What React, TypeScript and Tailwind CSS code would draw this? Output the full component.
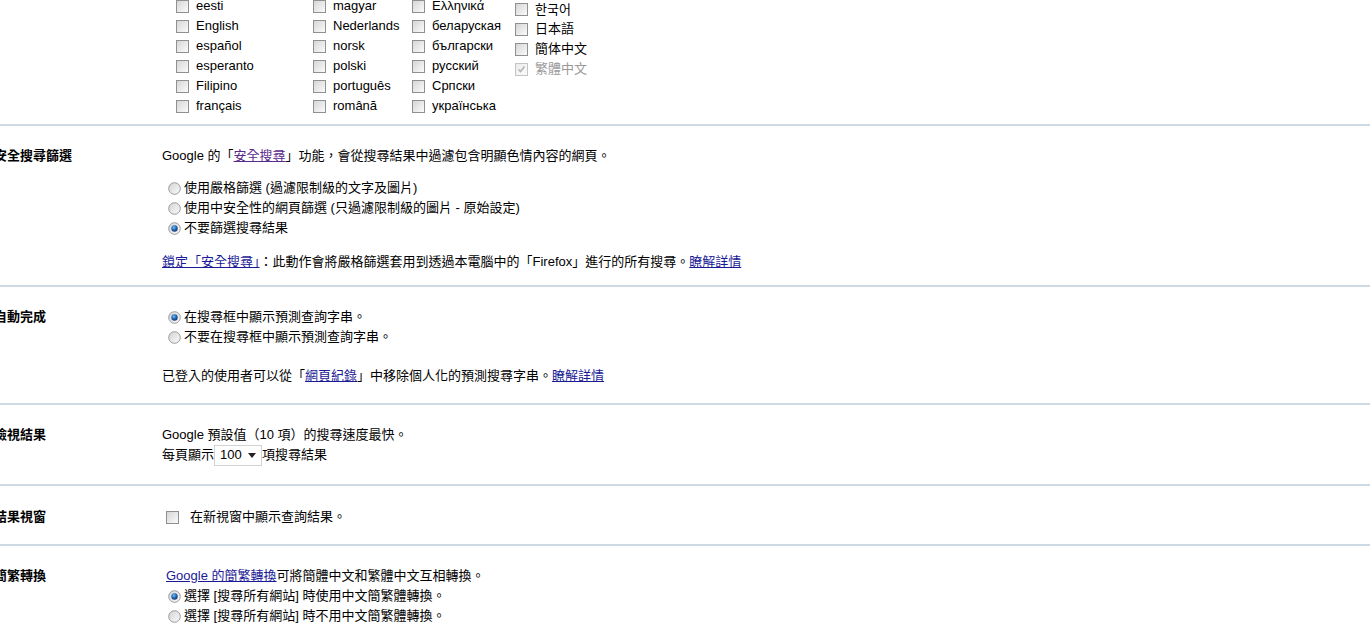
import React from "react";

function Box({ checked, disabled, className = "" }: { checked?: boolean; disabled?: boolean; className?: string }) {
  return (
    <span
      className={
        "relative inline-flex w-[13px] h-[13px] shrink-0 border bg-linear-to-br " +
        (disabled ? "border-[#c4c4c4] from-[#ececec] to-[#fbfbfb] " : "border-[#8f9090] from-[#d6d6d6] to-[#fbfbfb] ") +
        className
      }
    >
      {checked && (
        <svg width="11" height="11" viewBox="0 0 11 11" className="absolute left-0 top-0">
          <path d="M2.5 5.5 L4.5 7.5 L8.5 2.5" fill="none" stroke="#b4b4b4" strokeWidth="1.6" />
        </svg>
      )}
    </span>
  );
}

function Radio({ checked }: { checked?: boolean }) {
  return (
    <svg width="13" height="13" viewBox="0 0 13 13" className="shrink-0">
      <defs>
        <linearGradient id="rg" x1="0" y1="0" x2="1" y2="1">
          <stop offset="0" stopColor="#d2d2d2" />
          <stop offset="1" stopColor="#fcfcfc" />
        </linearGradient>
        <radialGradient id="rb" cx="0.4" cy="0.35" r="0.7">
          <stop offset="0" stopColor="#7cc4f8" />
          <stop offset="0.5" stopColor="#2468b4" />
          <stop offset="1" stopColor="#15336a" />
        </radialGradient>
      </defs>
      <circle cx="6.5" cy="6.5" r="5.8" fill="url(#rg)" stroke="#9a9a9a" strokeWidth="1" />
      {checked && <circle cx="6.5" cy="6.5" r="3.2" fill="url(#rb)" />}
    </svg>
  );
}

function RadioRow({ checked, children }: { checked?: boolean; children: React.ReactNode }) {
  return (
    <div className="flex items-center h-[20px] pl-[6px] gap-[3px] whitespace-nowrap">
      <Radio checked={checked} />
      <span>{children}</span>
    </div>
  );
}

function Sep() {
  return <div className="h-[2px] w-full bg-[#cdd9e5]" />;
}

const linkBlue = "text-[#1a1a96] underline";

const cols: string[][] = [
  ["eesti", "English", "español", "esperanto", "Filipino", "français"],
  ["magyar", "Nederlands", "norsk", "polski", "português", "română"],
  ["Ελληνικά", "беларуская", "български", "русский", "Српски", "українська"],
];
const colW = ["w-[137px]", "w-[99px]", "w-[103px]"];

function Label({ children }: { children: React.ReactNode }) {
  return <div className="w-[168px] shrink-0 ml-[-6px] font-bold leading-[20px] whitespace-nowrap">{children}</div>;
}

export default function App() {
  return (
    <div className="w-[1370px] h-[623px] overflow-hidden bg-white text-black text-[13px] leading-[20px] font-['Liberation_Sans','Noto_Sans_CJK_TC',sans-serif]">
      {/* languages */}
      <div className="flex mt-[-4px] pb-[8px] pl-[176px]">
        {cols.map((c, i) => (
          <div key={i} className={colW[i] + " flex flex-col"}>
            {c.map((l) => (
              <div key={l} className="flex items-center h-[20px] gap-[7px] whitespace-nowrap">
                <Box />
                <span>{l}</span>
              </div>
            ))}
          </div>
        ))}
        <div className="flex flex-col mt-[3px]">
          {[
            { t: "한국어", kr: true },
            { t: "日本語" },
            { t: "簡体中文" },
            { t: "繁體中文", dis: true },
          ].map((l) => (
            <div key={l.t} className="flex items-center h-[20px] gap-[7px] whitespace-nowrap">
              <Box checked={l.dis} disabled={l.dis} />
              <span
                className={
                  (l.dis ? "text-[#9a9a9a] " : "") +
                  (l.kr ? "font-['Noto_Sans_CJK_KR',sans-serif]" : "")
                }
              >
                {l.t}
              </span>
            </div>
          ))}
        </div>
      </div>
      <Sep />

      {/* safe search */}
      <div className="flex pt-[20px] pb-[13px]">
        <Label>安全搜尋篩選</Label>
        <div className="flex flex-col">
          <div className="whitespace-nowrap">
            Google 的「<a className="text-[#5a2a8c] underline">安全搜尋</a>」功能，會從搜尋結果中過濾包含明顯色情內容的網頁。
          </div>
          <div className="mt-[12px] flex flex-col">
            <RadioRow>使用嚴格篩選 (過濾限制級的文字及圖片)</RadioRow>
            <RadioRow>使用中安全性的網頁篩選 (只過濾限制級的圖片 - 原始設定)</RadioRow>
            <RadioRow checked>不要篩選搜尋結果</RadioRow>
          </div>
          <div className="mt-[14px] whitespace-nowrap">
            <a className={linkBlue}>鎖定「安全搜尋」</a>：此動作會將嚴格篩選套用到透過本電腦中的「Firefox」進行的所有搜尋。
            <a className={linkBlue}>瞭解詳情</a>
          </div>
        </div>
      </div>
      <Sep />

      {/* autocomplete */}
      <div className="flex pt-[20px] pb-[17px]">
        <Label>自動完成</Label>
        <div className="flex flex-col">
          <RadioRow checked>在搜尋框中顯示預測查詢字串。</RadioRow>
          <RadioRow>不要在搜尋框中顯示預測查詢字串。</RadioRow>
          <div className="mt-[19px] whitespace-nowrap">
            已登入的使用者可以從「<a className={linkBlue}>網頁紀錄</a>」中移除個人化的預測搜尋字串。
            <a className={linkBlue}>瞭解詳情</a>
          </div>
        </div>
      </div>
      <Sep />

      {/* results per page */}
      <div className="flex pt-[20px] pb-[19px]">
        <Label>檢視結果</Label>
        <div className="flex flex-col">
          <div className="whitespace-nowrap">Google 預設值（10 項）的搜尋速度最快。</div>
          <div className="flex items-center h-[20px] whitespace-nowrap">
            <span>每頁顯示</span>
            <span className="inline-flex items-center w-[48px] h-[21px] border border-[#d2d2d2] bg-white pl-[5px]">
              <span>100</span>
              <svg width="8" height="5" viewBox="0 0 8 5" className="ml-[6px]">
                <path d="M0 0 H8 L4 5 Z" fill="#222" />
              </svg>
            </span>
            <span>項搜尋結果</span>
          </div>
        </div>
      </div>
      <Sep />

      {/* new window */}
      <div className="flex pt-[21px] pb-[17px]">
        <Label>結果視窗</Label>
        <div className="flex items-center h-[20px] pl-[4px] gap-[11px] whitespace-nowrap">
          <Box />
          <span>在新視窗中顯示查詢結果。</span>
        </div>
      </div>
      <Sep />

      {/* conversion */}
      <div className="flex pt-[20px]">
        <Label>簡繁轉換</Label>
        <div className="flex flex-col">
          <div className="pl-[4px] whitespace-nowrap">
            <a className={linkBlue}>Google 的簡繁轉換</a>可將簡體中文和繁體中文互相轉換。
          </div>
          <RadioRow checked>選擇 [搜尋所有網站] 時使用中文簡繁體轉換。</RadioRow>
          <RadioRow>選擇 [搜尋所有網站] 時不用中文簡繁體轉換。</RadioRow>
        </div>
      </div>
    </div>
  );
}
